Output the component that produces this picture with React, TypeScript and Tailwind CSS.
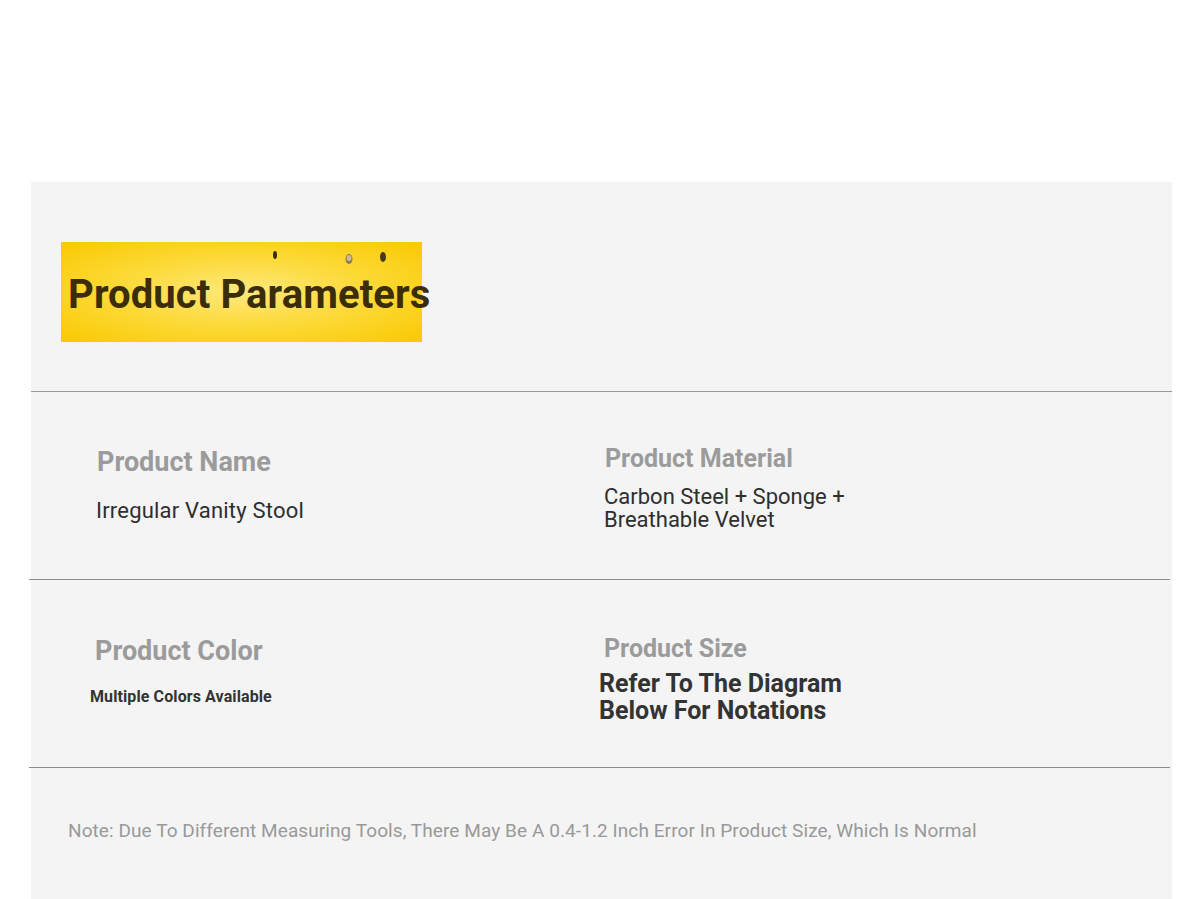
const font = { fontFamily: "Roboto, 'Liberation Sans', sans-serif" };

function Bees() {
  return (
    <svg className="absolute left-0 top-0" width="361" height="30" viewBox="0 0 361 30">
      <ellipse cx="214" cy="13" rx="2" ry="4" fill="#3a2c10" />
      <ellipse cx="288" cy="17" rx="3.5" ry="5" fill="#8a7a5a" />
      <ellipse cx="288" cy="16" rx="2.5" ry="3" fill="#c9b89a" />
      <ellipse cx="322" cy="15" rx="3" ry="5" fill="#4a3a18" />
    </svg>
  );
}

export default function App() {
  return (
    <div className="w-[1200px] min-h-[899px] bg-white pt-[182px]" style={font}>
      <div className="ml-[31px] w-[1141px] h-[717px] bg-[#f4f4f4] flex flex-col">
        <div className="h-[209px] pt-[60px] pl-[30px]">
          <div className="relative w-[361px] h-[100px] flex items-center pl-[7px] pt-[5px] bg-[radial-gradient(ellipse_at_center,#fde97e_0%,#fcd936_50%,#f9c900_100%)]">
            <Bees />
            <h1 className="relative whitespace-nowrap text-[40px] leading-[46px] font-bold text-[#3b2d0a] tracking-[0.1px]">
              Product Parameters
            </h1>
          </div>
        </div>
        <div className="h-[1px] bg-[#9a9a9a]" />

        <div className="h-[187px] flex">
          <div className="w-[508px] pt-[55px] pl-[66px]">
            <div className="text-[27px] leading-[31px] font-bold text-[#9b9b9b]">Product Name</div>
            <div className="mt-[20px] -ml-[1px] text-[22px] leading-[26px] text-[#2e2e2e] tracking-[0.2px]">
              Irregular Vanity Stool
            </div>
          </div>
          <div className="pt-[52px] pl-[66px]">
            <div className="text-[25px] leading-[30px] font-bold text-[#9b9b9b]">Product Material</div>
            <div className="mt-[11px] -ml-[1px] text-[22px] leading-[23px] text-[#2e2e2e]">
              Carbon Steel + Sponge +
              <br />
              Breathable Velvet
            </div>
          </div>
        </div>
        <div className="h-[1px] w-[1141px] -ml-[2px] bg-[#8c8c8c]" />

        <div className="h-[187px] flex">
          <div className="w-[508px] pt-[56px] pl-[64px]">
            <div className="text-[27px] leading-[31px] font-bold text-[#9b9b9b]">Product Color</div>
            <div className="mt-[20px] -ml-[5px] text-[16px] leading-[20px] font-bold text-[#333333] tracking-[0.1px]">
              Multiple Colors Available
            </div>
          </div>
          <div className="pt-[54px] pl-[65px]">
            <div className="text-[25px] leading-[30px] font-bold text-[#9b9b9b]">Product Size</div>
            <div className="mt-[6px] -ml-[5px] text-[25px] leading-[27px] font-bold text-[#333333]">
              Refer To The Diagram
              <br />
              Below For Notations
            </div>
          </div>
        </div>
        <div className="h-[1px] w-[1141px] -ml-[2px] bg-[#8c8c8c]" />

        <div className="flex-1 pt-[51px] pl-[37px]">
          <p className="text-[19px] leading-[24px] text-[#999999] whitespace-nowrap tracking-[0.08px]">
            Note: Due To Different Measuring Tools, There May Be A 0.4-1.2 Inch Error In Product Size, Which Is Normal
          </p>
        </div>
      </div>
    </div>
  );
}
